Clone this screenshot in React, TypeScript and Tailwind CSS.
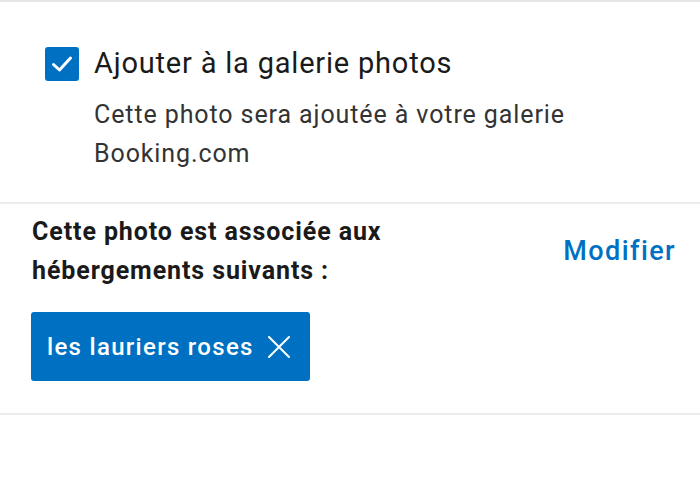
import React from 'react';

function CheckIcon() {
  return (
    <svg width="22" height="18" viewBox="0 0 22 18" fill="none">
      <path d="M2.5 9.5 L8.5 15 L19.5 3" stroke="white" strokeWidth="3" strokeLinecap="round" strokeLinejoin="round" />
    </svg>
  );
}

function CloseIcon() {
  return (
    <svg width="24" height="24" viewBox="0 0 24 24" fill="none">
      <path d="M2 2 L22 22 M22 2 L2 22" stroke="white" strokeWidth="2" strokeLinecap="round" />
    </svg>
  );
}

export default function App() {
  return (
    <div className="w-[700px] h-[500px] bg-white overflow-hidden" style={{ fontFamily: 'Roboto, "Liberation Sans", sans-serif' }}>
      <div className="border-t-2 border-[#e6e6e6]" />

      {/* gallery checkbox */}
      <div className="flex pl-[45px] pt-[41px] pb-[29px] border-b-2 border-[#ececec]">
        <div className="w-[34px] h-[34px] mt-[4px] rounded-[3px] bg-[#0071c2] flex items-center justify-center shrink-0">
          <CheckIcon />
        </div>
        <div className="pl-[15px]">
          <div className="text-[29px] leading-[40px] tracking-[0.8px] text-[#1a1a1a]">Ajouter à la galerie photos</div>
          <div className="mt-[12px] text-[25px] leading-[39px] tracking-[0.9px] text-[#333]">
            Cette photo sera ajoutée à votre galerie
            <br />
            Booking.com
          </div>
        </div>
      </div>

      {/* properties */}
      <div className="pl-[32px] pr-[24px] pt-[8px] pb-[32px] border-b-2 border-[#ececec]">
        <div className="flex items-center justify-between">
          <div className="text-[25px] leading-[39px] font-bold text-[#1a1a1a] tracking-[0.9px]">
            Cette photo est associée aux
            <br />
            hébergements suivants :
          </div>
          <div className="text-[27px] font-medium text-[#0071c2] tracking-[1.4px]">Modifier</div>
        </div>
        <div className="mt-[22px] inline-flex items-center gap-[13px] h-[69px] pl-[16px] pr-[19px] rounded-[3px] bg-[#0071c2] -ml-[1px]">
          <span className="text-[24px] font-medium text-white tracking-[1.3px]">les lauriers roses</span>
          <CloseIcon />
        </div>
      </div>
    </div>
  );
}
